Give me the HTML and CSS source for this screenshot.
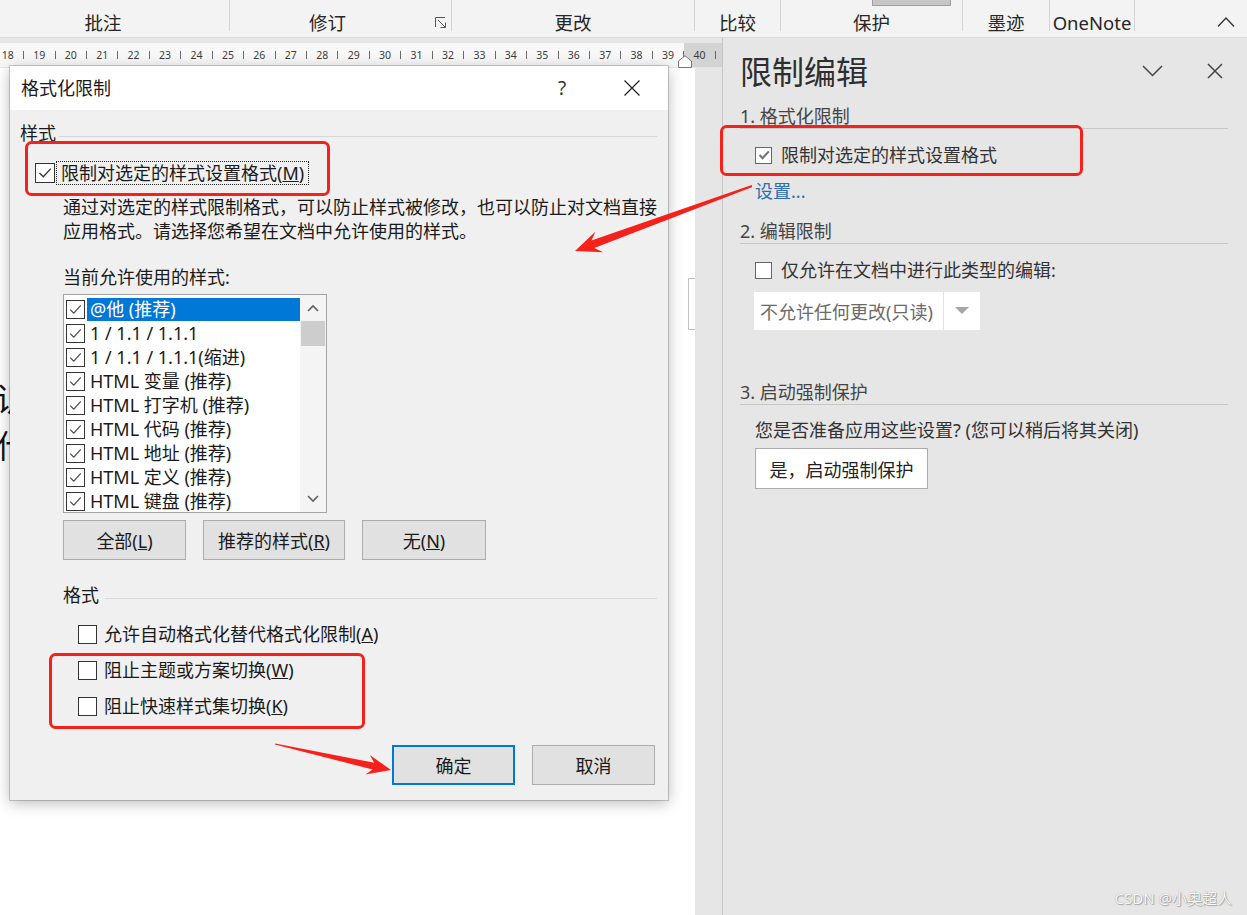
FILE: index.html
```html
<!DOCTYPE html>
<html lang="zh-CN">
<head>
<meta charset="utf-8">
<title>格式化限制</title>
<link rel="stylesheet" href="styles.css">
</head>
<body>
<div class="app">
  <header class="ribbon">
    <div class="rgroup g1"><span>批注</span></div>
    <div class="rgroup g2"><span>修订</span>
      <svg class="launcher" width="11" height="11" viewBox="0 0 11 11"><path d="M0.5 10 V0.5 H10" fill="none" stroke="#555" stroke-width="1"/><path d="M3 3 L10 10 M5.5 10.5 H10.5 V5.5" fill="none" stroke="#555" stroke-width="1"/></svg>
    </div>
    <div class="rgroup g3"><span>更改</span></div>
    <div class="rgroup g4"><span>比较</span></div>
    <div class="rgroup g5"><div class="ribbon-btn"></div><span>保护</span></div>
    <div class="rgroup g6"><span>墨迹</span></div>
    <div class="rgroup g7"><span>OneNote</span></div>
    <div class="ribbon-fill"></div>
    <svg class="collapse" width="18" height="10" viewBox="0 0 18 10"><path d="M1 9.5 L9 1 L17 9.5" fill="none" stroke="#333" stroke-width="1.3"/></svg>
  </header>

  <div class="main">
    <div class="doc">
      <div class="ruler">
        <div class="ruler-track">
          <span class="rc">18</span><span class="rc tick"></span>
          <span class="rc">19</span><span class="rc tick"></span>
          <span class="rc">20</span><span class="rc tick"></span>
          <span class="rc">21</span><span class="rc tick"></span>
          <span class="rc">22</span><span class="rc tick"></span>
          <span class="rc">23</span><span class="rc tick"></span>
          <span class="rc">24</span><span class="rc tick"></span>
          <span class="rc">25</span><span class="rc tick"></span>
          <span class="rc">26</span><span class="rc tick"></span>
          <span class="rc">27</span><span class="rc tick"></span>
          <span class="rc">28</span><span class="rc tick"></span>
          <span class="rc">29</span><span class="rc tick"></span>
          <span class="rc">30</span><span class="rc tick"></span>
          <span class="rc">31</span><span class="rc tick"></span>
          <span class="rc">32</span><span class="rc tick"></span>
          <span class="rc">33</span><span class="rc tick"></span>
          <span class="rc">34</span><span class="rc tick"></span>
          <span class="rc">35</span><span class="rc tick"></span>
          <span class="rc">36</span><span class="rc tick"></span>
          <span class="rc">37</span><span class="rc tick"></span>
          <span class="rc">38</span><span class="rc tick"></span>
          <span class="rc">39</span><span class="rc tick"></span>
          <span class="rc">40</span><span class="rc tick"></span>
        </div>
        <svg class="indent-marker" width="14" height="13" viewBox="0 0 14 13"><path d="M0.5 12.5 V6 L7 0.8 L13.5 6 V12.5 Z" fill="#fff" stroke="#777" stroke-width="1"/></svg>
      </div>
      <div class="docbody">
        <div class="page">
          <div class="page-text">识<br>什</div>
          <div class="page-scroll"></div>
        </div>
        <div class="gutter"></div>
      </div>

      <div class="dialog">
        <div class="dlg-title">
          <span class="dlg-title-text">格式化限制</span>
          <span class="dlg-help">?</span>
          <svg class="dlg-close" width="16" height="16" viewBox="0 0 16 16"><path d="M0.5 0.5 L15.5 15.5 M15.5 0.5 L0.5 15.5" stroke="#222" stroke-width="1.2"/></svg>
        </div>
        <div class="dlg-body">
          <div class="legend legend-style">样式</div>
          <div class="main-check">
            <span class="cb cb20"><svg width="18" height="18" viewBox="0 0 18 18"><path d="M3.5 9 L7.3 12.8 L14.8 4.6" fill="none" stroke="#333" stroke-width="1.3"/></svg></span>
            <span class="focus-label">限制对选定的样式设置格式(<u>M</u>)</span>
          </div>
          <p class="desc">通过对选定的样式限制格式，可以防止样式被修改，也可以防止对文档直接<br>应用格式。请选择您希望在文档中允许使用的样式。</p>
          <div class="list-label">当前允许使用的样式:</div>
          <div class="listbox">
            <div class="list-items">
              <div class="li"><span class="cb cb19"><svg width="17" height="17" viewBox="0 0 17 17"><path d="M3.2 8.6 L6.8 12.2 L13.8 4.4" fill="none" stroke="#444" stroke-width="1.2"/></svg></span><span class="li-text selected">@他 (推荐)</span></div>
              <div class="li"><span class="cb cb19"><svg width="17" height="17" viewBox="0 0 17 17"><path d="M3.2 8.6 L6.8 12.2 L13.8 4.4" fill="none" stroke="#444" stroke-width="1.2"/></svg></span><span class="li-text">1 / 1.1 / 1.1.1</span></div>
              <div class="li"><span class="cb cb19"><svg width="17" height="17" viewBox="0 0 17 17"><path d="M3.2 8.6 L6.8 12.2 L13.8 4.4" fill="none" stroke="#444" stroke-width="1.2"/></svg></span><span class="li-text">1 / 1.1 / 1.1.1(缩进)</span></div>
              <div class="li"><span class="cb cb19"><svg width="17" height="17" viewBox="0 0 17 17"><path d="M3.2 8.6 L6.8 12.2 L13.8 4.4" fill="none" stroke="#444" stroke-width="1.2"/></svg></span><span class="li-text">HTML 变量 (推荐)</span></div>
              <div class="li"><span class="cb cb19"><svg width="17" height="17" viewBox="0 0 17 17"><path d="M3.2 8.6 L6.8 12.2 L13.8 4.4" fill="none" stroke="#444" stroke-width="1.2"/></svg></span><span class="li-text">HTML 打字机 (推荐)</span></div>
              <div class="li"><span class="cb cb19"><svg width="17" height="17" viewBox="0 0 17 17"><path d="M3.2 8.6 L6.8 12.2 L13.8 4.4" fill="none" stroke="#444" stroke-width="1.2"/></svg></span><span class="li-text">HTML 代码 (推荐)</span></div>
              <div class="li"><span class="cb cb19"><svg width="17" height="17" viewBox="0 0 17 17"><path d="M3.2 8.6 L6.8 12.2 L13.8 4.4" fill="none" stroke="#444" stroke-width="1.2"/></svg></span><span class="li-text">HTML 地址 (推荐)</span></div>
              <div class="li"><span class="cb cb19"><svg width="17" height="17" viewBox="0 0 17 17"><path d="M3.2 8.6 L6.8 12.2 L13.8 4.4" fill="none" stroke="#444" stroke-width="1.2"/></svg></span><span class="li-text">HTML 定义 (推荐)</span></div>
              <div class="li"><span class="cb cb19"><svg width="17" height="17" viewBox="0 0 17 17"><path d="M3.2 8.6 L6.8 12.2 L13.8 4.4" fill="none" stroke="#444" stroke-width="1.2"/></svg></span><span class="li-text">HTML 键盘 (推荐)</span></div>
            </div>
            <div class="sbar">
              <div class="sbtn"><svg width="12" height="8" viewBox="0 0 12 8"><path d="M1 7 L6 2 L11 7" fill="none" stroke="#606060" stroke-width="1.6"/></svg></div>
              <div class="sthumb"></div>
              <div class="strack"></div>
              <div class="sbtn"><svg width="12" height="8" viewBox="0 0 12 8"><path d="M1 1 L6 6 L11 1" fill="none" stroke="#606060" stroke-width="1.6"/></svg></div>
            </div>
          </div>
          <div class="btn-row">
            <button class="btn b-all">全部(<u>L</u>)</button>
            <button class="btn b-rec">推荐的样式(<u>R</u>)</button>
            <button class="btn b-none">无(<u>N</u>)</button>
          </div>
          <div class="legend legend-format">格式</div>
          <div class="opt"><span class="cb cb19"></span><span class="opt-text">允许自动格式化替代格式化限制(<u>A</u>)</span></div>
          <div class="opt"><span class="cb cb19"></span><span class="opt-text">阻止主题或方案切换(<u>W</u>)</span></div>
          <div class="opt"><span class="cb cb19"></span><span class="opt-text">阻止快速样式集切换(<u>K</u>)</span></div>
          <div class="dlg-foot">
            <button class="btn b-foot b-ok">确定</button>
            <button class="btn b-foot">取消</button>
          </div>
        </div>
      </div>
    </div>

    <aside class="pane">
      <div class="pane-head">
        <span class="pane-title">限制编辑</span>
        <svg class="pane-chev" width="21" height="12" viewBox="0 0 21 12"><path d="M1 1 L10.5 10.5 L20 1" fill="none" stroke="#444" stroke-width="1.5"/></svg>
        <svg class="pane-close" width="16" height="16" viewBox="0 0 16 16"><path d="M1 1 L15 15 M15 1 L1 15" stroke="#444" stroke-width="1.5"/></svg>
      </div>
      <div class="sec-head">1. 格式化限制</div>
      <div class="pcheck"><span class="pcb"><svg width="14" height="14" viewBox="0 0 14 14"><path d="M2.5 7 L5.6 10.2 L11.8 3.4" fill="none" stroke="#707070" stroke-width="2"/></svg></span><span class="pcheck-text">限制对选定的样式设置格式</span></div>
      <div class="plink">设置...</div>
      <div class="sec-head sec2">2. 编辑限制</div>
      <div class="pcheck pcheck2"><span class="pcb"></span><span class="pcheck-text">仅允许在文档中进行此类型的编辑:</span></div>
      <div class="pselect">
        <span class="pselect-text">不允许任何更改(只读)</span>
        <span class="pselect-arrow"><svg width="14" height="8" viewBox="0 0 14 8"><path d="M0 0 H14 L7 7 Z" fill="#a6a6a6"/></svg></span>
      </div>
      <div class="sec-head sec3">3. 启动强制保护</div>
      <div class="ptext">您是否准备应用这些设置? (您可以稍后将其关闭)</div>
      <button class="pbtn">是，启动强制保护</button>
    </aside>
  </div>
</div>

<svg class="annot" width="1247" height="915" viewBox="0 0 1247 915">
  <rect x="26.5" y="142.5" width="302" height="52" rx="5" fill="none" stroke="#f5211a" stroke-width="3"/>
  <rect x="50.5" y="654.5" width="313" height="73" rx="5" fill="none" stroke="#f5211a" stroke-width="3"/>
  <rect x="721.5" y="126.5" width="360" height="48" rx="5" fill="none" stroke="#f5211a" stroke-width="3"/>
  <polygon points="575,251 595.6,231.6 591.4,240.6 751.7,185.1 752.3,186.9 594.2,248.1 603.2,252.3" fill="#f5211a"/>
  <polygon points="391,770 365.4,774.5 372.7,769.5 275,744.6 275.2,743.4 374.2,762.7 369.8,755.0" fill="#f5211a"/>
</svg>
<div class="watermark">CSDN @小奥超人</div>
</body>
</html>
```

FILE: styles.css
```css
* { box-sizing: border-box; margin: 0; padding: 0; }

body {
  width: 1247px;
  height: 915px;
  overflow: hidden;
  position: relative;
  background: #fff;
  font-family: "Noto Sans", "Noto Sans CJK SC", sans-serif;
  color: #1e1e1e;
}

.app { display: flex; flex-direction: column; height: 915px; }

/* ribbon */
.ribbon {
  height: 38px;
  flex: none;
  background: #f3f3f3;
  border-bottom: 1px solid #d9d9d9;
  display: flex;
  align-items: flex-start;
}
.rgroup {
  height: 31px;
  flex: none;
  border-right: 1px solid #d4d4d4;
  display: flex;
  justify-content: center;
  padding-top: 10px;
  font-size: 18.5px;
  line-height: 25px;
  color: #262626;
  position: relative;
}
.g1 { width: 230px; padding-right: 23px; }
.g2 { width: 222px; padding-right: 26px; }
.g3 { width: 243px; }
.g4 { width: 86px; }
.g5 { width: 182px; }
.g6 { width: 87px; }
.g7 { width: 85px; }
.launcher { position: absolute; left: 205px; top: 17px; }
.ribbon-btn {
  position: absolute;
  left: 91px;
  top: -1px;
  width: 79px;
  height: 7px;
  background: #c6c6c6;
  border: 1px solid #9f9f9f;
}
.ribbon-fill { flex: 1; }
.collapse { margin: 17px 12px 0 0; flex: none; }

/* main */
.main { flex: 1; display: flex; min-height: 0; }
.doc { width: 722px; flex: none; display: flex; flex-direction: column; position: relative; }

.ruler { height: 30px; flex: none; background: #e6e6e6; padding-top: 5px; position: relative; }
.ruler-track {
  height: 24px;
  display: flex;
  align-items: center;
  background: linear-gradient(to right, #f8f8f8 0, #f8f8f8 684px, #d3d3d3 684px);
  font-size: 10.5px;
  color: #3c3c3c;
}
.rc { width: 15.72px; flex: none; text-align: center; }
.tick::before { content: ""; display: block; width: 1px; height: 8px; background: #6a6a6a; margin: 0 auto; }
.indent-marker { position: absolute; left: 678px; top: 17px; }

.docbody { flex: 1; display: flex; }
.page { width: 695px; flex: none; background: #fff; position: relative; overflow: hidden; }
.page-text {
  margin: 306px 0 0 -4px;
  font-family: "Noto Sans CJK SC", sans-serif;
  font-size: 32px;
  line-height: 47px;
  color: #111;
}
.page-scroll {
  position: absolute;
  left: 688px;
  top: 210px;
  width: 8px;
  height: 52px;
  border: 1px solid #c3c3c3;
  border-right: none;
}
.gutter { flex: 1; background: #e6e6e6; }

/* dialog */
.dialog {
  position: absolute;
  left: 10px;
  top: 28px;
  width: 658px;
  height: 734px;
  background: #f0f0f0;
  box-shadow: 0 0 0 1px rgba(0,0,0,0.18), 0 3px 14px rgba(0,0,0,0.28);
  font-size: 18px;
  color: #1a1a1a;
  font-family: "Noto Sans", "Noto Sans CJK SC", sans-serif;
}
.dlg-title {
  height: 44px;
  background: #fff;
  display: flex;
  align-items: center;
  padding-left: 11px;
}
.dlg-title-text { flex: 1; line-height: 24px; }
.dlg-help { width: 24px; text-align: center; margin-right: 50px; font-size: 19px; color: #333; }
.dlg-close { margin-right: 28px; }

.dlg-body { padding: 11px 11px 0 10px; }
.legend { display: flex; align-items: center; height: 24px; line-height: 24px; }
.legend::after { content: ""; flex: 1; height: 1px; background: #d7d7d7; margin-top: 6px; }
.legend-style::after { margin-left: 3px; }
.legend-format { margin: 23px 0 0 43px; }
.legend-format::after { margin-left: 6px; }

.cb {
  display: inline-flex;
  align-items: center;
  justify-content: center;
  flex: none;
  background: #fff;
  border: 1px solid #333;
}
.cb20 { width: 20px; height: 20px; }
.cb19 { width: 19px; height: 19px; }

.main-check { display: flex; align-items: center; height: 24px; margin: 16px 0 0 15px; }
.focus-label {
  margin-left: 1px;
  border: 1px dotted #222;
  padding: 0 4px;
  height: 24px;
  line-height: 22px;
}
.desc { margin: 10px 0 0 43px; line-height: 24px; }
.list-label { margin: 22px 0 0 43px; line-height: 24px; }

.listbox {
  margin: 5px 0 0 43px;
  width: 264px;
  height: 219px;
  border: 1px solid #a3a3a3;
  background: #fff;
  display: flex;
}
.list-items { flex: 1; padding-top: 2px; overflow: hidden; }
.li { height: 24px; display: flex; align-items: center; padding-left: 2px; }
.li-text {
  flex: 1;
  margin-left: 2px;
  padding-left: 3px;
  height: 23px;
  line-height: 23px;
  white-space: nowrap;
}
.li-text.selected { background: #0078d7; color: #fff; }

.sbar { width: 26px; flex: none; background: #f4f4f4; display: flex; flex-direction: column; }
.sbtn { height: 26px; display: flex; align-items: center; justify-content: center; flex: none; }
.sthumb { height: 25px; margin: 0 1px; background: #cdcdcd; flex: none; }
.strack { flex: 1; }

.btn-row { display: flex; gap: 17px; margin: 7px 0 0 43px; }
.btn {
  height: 40px;
  border: 1px solid #adadad;
  background: #e1e1e1;
  font-family: "Noto Sans", "Noto Sans CJK SC", sans-serif;
  font-size: 18px;
  color: #1a1a1a;
}
.b-all { width: 123px; }
.b-rec { width: 142px; }
.b-none { width: 124px; }

.opt { display: flex; align-items: center; height: 24px; margin: 12px 0 0 58px; }
.legend-format + .opt { margin-top: 15px; }
.opt-text { margin-left: 7px; line-height: 24px; white-space: nowrap; }

.dlg-foot { display: flex; justify-content: flex-end; gap: 17px; margin: 27px 2px 0 0; }
.b-foot { width: 123px; }
.b-ok { border: 2px solid #0078d7; }

/* pane */
.pane {
  flex: 1;
  background: #e6e6e6;
  border-left: 1px solid #c6c6c6;
  padding: 12px 19px 0 17px;
  font-family: "Noto Sans", "Noto Sans CJK SC", sans-serif;
  font-size: 18px;
  color: #333;
}
.pane-head { display: flex; align-items: center; height: 40px; }
.pane-title {
  flex: 1;
  font-family: "Noto Sans CJK SC", sans-serif;
  font-size: 32px;
  line-height: 40px;
  color: #2e2e2e;
}
.pane-chev { margin: 0 44px -2px 0; }
.pane-close { margin: 0 5px -2px 0; }

.sec-head {
  margin-top: 15px;
  line-height: 23px;
  color: #444;
  border-bottom: 1px solid #c8c8c8;
}
.sec-head + .pcheck { margin-top: 14px; }
.sec2 { margin-top: 17px; }
.sec3 { margin-top: 51px; }

.pcheck { display: flex; align-items: center; height: 24px; margin-left: 15px; }
.pcheck2 { margin-top: 15px; }
.pcb {
  width: 17px;
  height: 17px;
  flex: none;
  background: #fff;
  border: 1.5px solid #666;
  display: flex;
  align-items: center;
  justify-content: center;
}
.pcheck-text { margin-left: 9px; line-height: 24px; color: #333; }
.plink { margin: 12px 0 0 15px; line-height: 24px; color: #2f6cb0; }

.pselect {
  margin: 10px 0 0 14px;
  width: 226px;
  height: 38px;
  background: #fff;
  display: flex;
  align-items: center;
}
.pselect-text { flex: 1; padding-left: 6px; color: #6a6a6a; }
.pselect-arrow {
  width: 37px;
  height: 100%;
  border-left: 1px solid #e3e3e3;
  display: flex;
  align-items: center;
  justify-content: center;
}
.ptext { margin: 13px 0 0 15px; line-height: 24px; color: #333; white-space: nowrap; }
.pbtn {
  margin: 6px 0 0 15px;
  width: 173px;
  height: 41px;
  background: #fff;
  border: 1px solid #ababab;
  font-family: "Noto Sans", "Noto Sans CJK SC", sans-serif;
  font-size: 18px;
  color: #222;
}

/* annotations */
.annot { position: absolute; left: 0; top: 0; pointer-events: none; }
.watermark {
  position: absolute;
  right: 15px;
  bottom: 7px;
  font-family: "Noto Sans", "Noto Sans CJK SC", sans-serif;
  font-size: 15px;
  color: rgba(255,255,255,0.95);
  text-shadow: 0 0 1px rgba(0,0,0,0.35), 1px 1px 1px rgba(0,0,0,0.25);
}
```
